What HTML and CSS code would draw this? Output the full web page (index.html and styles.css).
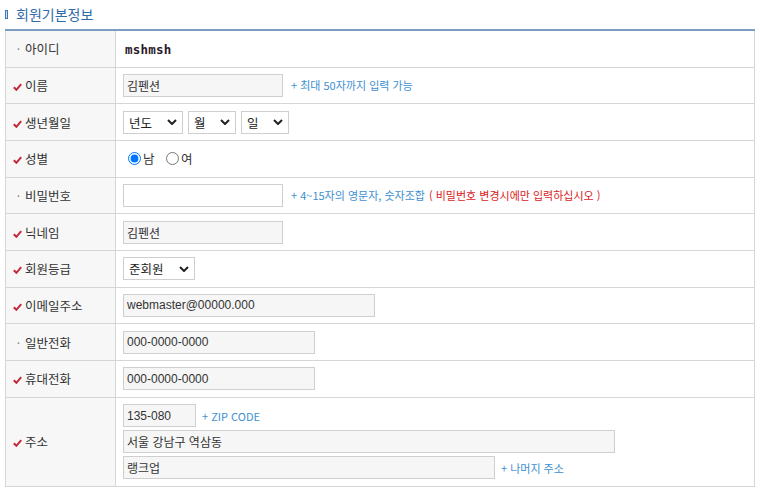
FILE: index.html
```html
<!DOCTYPE html>
<html lang="ko">
<head>
<meta charset="utf-8">
<title>회원기본정보</title>
<link rel="stylesheet" href="styles.css">
</head>
<body>
<h2 class="title"><span class="title-bar"></span>회원기본정보</h2>
<table class="form">
  <colgroup><col class="col-label"><col></colgroup>
  <tr class="first">
    <th><span class="dot">·</span>아이디</th>
    <td><strong class="userid">mshmsh</strong></td>
  </tr>
  <tr>
    <th><svg class="chk" viewBox="0 0 9 8"><path d="M0.8 4.2 L3.4 6.8 L8.2 1.2" /></svg>이름</th>
    <td><input class="inp gray w160" value="김펜션"><span class="help">+ 최대 50자까지 입력 가능</span></td>
  </tr>
  <tr>
    <th><svg class="chk" viewBox="0 0 9 8"><path d="M0.8 4.2 L3.4 6.8 L8.2 1.2" /></svg>생년월일</th>
    <td>
      <span class="sel w60"><span class="sel-txt">년도</span><svg class="chev" viewBox="0 0 10 6"><path d="M1 1 L5 5 L9 1"/></svg></span><span class="sel w48"><span class="sel-txt">월</span><svg class="chev" viewBox="0 0 10 6"><path d="M1 1 L5 5 L9 1"/></svg></span><span class="sel w48"><span class="sel-txt">일</span><svg class="chev" viewBox="0 0 10 6"><path d="M1 1 L5 5 L9 1"/></svg></span>
    </td>
  </tr>
  <tr>
    <th><svg class="chk" viewBox="0 0 9 8"><path d="M0.8 4.2 L3.4 6.8 L8.2 1.2" /></svg>성별</th>
    <td>
      <label class="radio"><input type="radio" name="sex" checked>남</label>
      <label class="radio"><input type="radio" name="sex">여</label>
    </td>
  </tr>
  <tr>
    <th><span class="dot">·</span>비밀번호</th>
    <td><input class="inp white w160" value=""><span class="help">+ 4~15자의 영문자, 숫자조합</span><span class="warn">( 비밀번호 변경시에만 입력하십시오 )</span></td>
  </tr>
  <tr>
    <th><svg class="chk" viewBox="0 0 9 8"><path d="M0.8 4.2 L3.4 6.8 L8.2 1.2" /></svg>닉네임</th>
    <td><input class="inp gray w160" value="김펜션"></td>
  </tr>
  <tr>
    <th><svg class="chk" viewBox="0 0 9 8"><path d="M0.8 4.2 L3.4 6.8 L8.2 1.2" /></svg>회원등급</th>
    <td><span class="sel w72"><span class="sel-txt">준회원</span><svg class="chev" viewBox="0 0 10 6"><path d="M1 1 L5 5 L9 1"/></svg></span></td>
  </tr>
  <tr>
    <th><svg class="chk" viewBox="0 0 9 8"><path d="M0.8 4.2 L3.4 6.8 L8.2 1.2" /></svg>이메일주소</th>
    <td><input class="inp gray w252" value="webmaster@00000.000"></td>
  </tr>
  <tr>
    <th><span class="dot">·</span>일반전화</th>
    <td><input class="inp gray w192" value="000-0000-0000"></td>
  </tr>
  <tr>
    <th><svg class="chk" viewBox="0 0 9 8"><path d="M0.8 4.2 L3.4 6.8 L8.2 1.2" /></svg>휴대전화</th>
    <td><input class="inp gray w192" value="000-0000-0000"></td>
  </tr>
  <tr class="addr">
    <th><svg class="chk" viewBox="0 0 9 8"><path d="M0.8 4.2 L3.4 6.8 L8.2 1.2" /></svg>주소</th>
    <td>
      <div class="addr-line"><input class="inp gray w72" value="135-080"><span class="help">+ ZIP CODE</span></div>
      <div class="addr-line"><input class="inp gray w492" value="서울 강남구 역삼동"></div>
      <div class="addr-line"><input class="inp gray w372" value="랭크업"><span class="help">+ 나머지 주소</span></div>
    </td>
  </tr>
</table>
</body>
</html>
```
FILE: styles.css
```css
* { box-sizing: border-box; }
body {
  margin: 0;
  padding: 0 5px;
  background: #fff;
  font-family: "Noto Sans CJK KR", "Liberation Sans", sans-serif;
  font-size: 12px;
  color: #333;
}
.title {
  margin: 0;
  height: 29px;
  padding-top: 3px;
  padding-bottom: 4px;
  display: flex;
  align-items: center;
  gap: 8px;
  font-size: 14px;
  font-weight: normal;
  color: #2f6ba8;
  line-height: 22px;
}
.title-bar {
  display: inline-block;
  width: 3px;
  height: 9px;
  border: 1px solid #3f79b5;
  background: #cfe0f2;
}
.form {
  width: 750px;
  border-collapse: collapse;
  border-top: 2px solid #7d9dc0;
  border-left: 1px solid #d6d6d6;
  border-right: 1px solid #d6d6d6;
}
.col-label { width: 110px; }
.form th, .form td {
  border-bottom: 1px solid #d6d6d6;
  height: 36.7px;
  padding: 0;
  vertical-align: middle;
}
.form tr.first th, .form tr.first td { height: 37px; }
.form th {
  background: #f7f7f7;
  border-right: 1px solid #d6d6d6;
  text-align: left;
  font-weight: normal;
  padding-left: 6px;
  color: #333;
  white-space: nowrap;
  font-size: 12.5px;
}
.form td { padding-left: 7px; }
.dot {
  display: inline-block;
  width: 13px;
  text-align: center;
  color: #888;
  font-size: 12px;
}
.chk {
  display: inline-block;
  width: 9px;
  height: 8px;
  margin: 0 3px 0 1px;
  vertical-align: 0;
}
.chk path {
  fill: none;
  stroke: #c4283a;
  stroke-width: 2;
}
.userid {
  font-family: "DejaVu Sans Mono", "Liberation Mono", monospace;
  font-size: 12.5px;
  font-weight: bold;
  color: #2a1a2a;
  letter-spacing: 0.2px;
  padding-left: 2px;
}
.inp {
  height: 23px;
  border: 1px solid #cfcfcf;
  padding: 0 3px;
  font-family: "Liberation Sans", "Noto Sans CJK KR", sans-serif;
  font-size: 12px;
  color: #333;
  vertical-align: middle;
  outline: none;
}
.inp.gray { background: #f6f6f6; }
.inp.white { background: #fff; }
.w72 { width: 73px; }
.w160 { width: 160px; }
.w192 { width: 192px; }
.w252 { width: 252px; }
.w372 { width: 372px; }
.w492 { width: 492px; }
.help {
  color: #3d8fd1;
  font-size: 11px;
  margin-left: 8px;
  vertical-align: middle;
}
.warn {
  color: #d91c1c;
  font-size: 11px;
  margin-left: 4px;
  vertical-align: middle;
}
.sel {
  display: inline-flex;
  align-items: center;
  justify-content: space-between;
  height: 23px;
  border: 1px solid #cfcfcf;
  background: #fff;
  padding: 0 5px;
  margin-right: 5px;
  vertical-align: middle;
  font-size: 12.5px;
  color: #222;
}
.sel.w60 { width: 60px; }
.sel.w48 { width: 48px; }
.sel.w72 { width: 72px; }
.chev {
  width: 10px;
  height: 6px;
}
.chev path {
  fill: none;
  stroke: #222;
  stroke-width: 2;
}
.radio {
  display: inline-flex;
  align-items: center;
  margin-left: 5px;
  margin-right: 6px;
  color: #333;
  font-size: 12.5px;
}
.radio + .radio { margin-left: 2px; }
.radio input {
  width: 13px;
  height: 13px;
  margin: 0 2px 0 0;
  accent-color: #0075ff;
}
.form tr.addr td, .form tr.addr th { height: 89px; }
.addr-line {
  display: flex;
  align-items: center;
  height: 23px;
  margin: 3px 0;
}
.addr-line .help { margin-left: 6px; }
```
